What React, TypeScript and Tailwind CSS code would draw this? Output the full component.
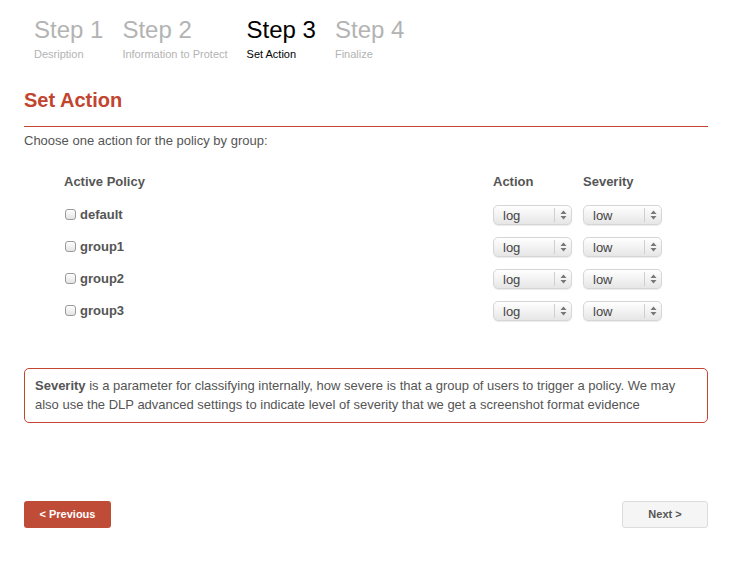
import React from 'react';

const steps = [
  { title: 'Step 1', sub: 'Desription', active: false },
  { title: 'Step 2', sub: 'Information to Protect', active: false },
  { title: 'Step 3', sub: 'Set Action', active: true },
  { title: 'Step 4', sub: 'Finalize', active: false },
];

const groups = ['default', 'group1', 'group2', 'group3'];

const FakeSelect = ({ value }: { value: string }) => (
  <div className="flex h-[20px] w-[79px] items-center rounded-[5px] border border-[#d6d6d6] bg-gradient-to-b from-[#ffffff] to-[#e6e6e6] shadow-[0_1px_1px_rgba(0,0,0,0.08)]">
    <span className="flex-1 pl-[9px] text-[13px] leading-none text-[#444]">{value}</span>
    <div className="flex h-[14px] w-[17px] items-center justify-center border-l border-[#cfcfcf]">
      <svg width="7" height="10" viewBox="0 0 7 10">
        <path d="M3.5 0.5 L6.5 4 L0.5 4 Z" fill="#777" />
        <path d="M3.5 9.5 L6.5 6 L0.5 6 Z" fill="#777" />
      </svg>
    </div>
  </div>
);

const App = () => {
  return (
    <div className="min-h-[564px] w-[753px] bg-white font-['Liberation_Sans',Arial,sans-serif] text-[#555]">
      <div className="ml-[24px] w-[684px]">
        {/* wizard steps */}
        <div className="flex gap-[19px] pl-[10px] pt-[15px]">
          {steps.map((s) => (
            <div key={s.title} className="flex flex-col">
              <span className={`text-[24px] leading-[30px] ${s.active ? 'text-black' : 'text-[#b3b3b3]'}`}>
                {s.title}
              </span>
              <span className={`mt-[2px] text-[11px] leading-[14px] ${s.active ? 'text-black' : 'text-[#b3b3b3]'}`}>
                {s.sub}
              </span>
            </div>
          ))}
        </div>

        <h1 className="mt-[27px] text-[20px] font-bold leading-[24px] text-[#c1452f]">Set Action</h1>
        <div className="mt-[14px] h-px bg-[#c1452f]" />
        <p className="mt-[6px] text-[13px] leading-[16px] text-[#555]">Choose one action for the policy by group:</p>

        {/* policy table */}
        <div className="mt-[17px] grid grid-cols-[429px_90px_80px] pl-[40px]">
          <div className="flex h-[32px] items-center text-[13px] font-bold">Active Policy</div>
          <div className="flex h-[32px] items-center text-[13px] font-bold">Action</div>
          <div className="flex h-[32px] items-center text-[13px] font-bold">Severity</div>
          {groups.map((g) => (
            <React.Fragment key={g}>
              <div className="flex h-[32px] items-center gap-[4px] pt-[1px]">
                <div className="ml-[1px] h-[11px] w-[11px] rounded-[3px] border border-[#9a9a9a] bg-gradient-to-b from-[#fff] to-[#e4e4e4]" />
                <span className="text-[13px] font-bold text-[#555]">{g}</span>
              </div>
              <div className="flex h-[32px] items-center pt-[2px]">
                <FakeSelect value="log" />
              </div>
              <div className="flex h-[32px] items-center pt-[2px]">
                <FakeSelect value="low" />
              </div>
            </React.Fragment>
          ))}
        </div>

        {/* note */}
        <div className="mt-[42px] rounded-[5px] border border-[#c1452f] px-[10px] pt-[7px] pb-[8px] text-[13px] leading-[19px] text-[#555]">
          <b>Severity</b> is a parameter for classifying internally, how severe is that a group of users to trigger a policy. We may also use the DLP advanced settings to indicate level of severity that we get a screenshot format evidence
        </div>

        {/* navigation */}
        <div className="mt-[78px] flex justify-between">
          <button className="h-[27px] w-[87px] rounded-[3px] bg-[#bf4c37] text-[11px] font-bold text-white">
            &lt; Previous
          </button>
          <button className="h-[27px] w-[86px] rounded-[3px] border border-[#dcdcdc] bg-[#f5f5f5] text-[11px] font-bold text-[#555]">
            Next &gt;
          </button>
        </div>
      </div>
    </div>
  );
};

export default App;
